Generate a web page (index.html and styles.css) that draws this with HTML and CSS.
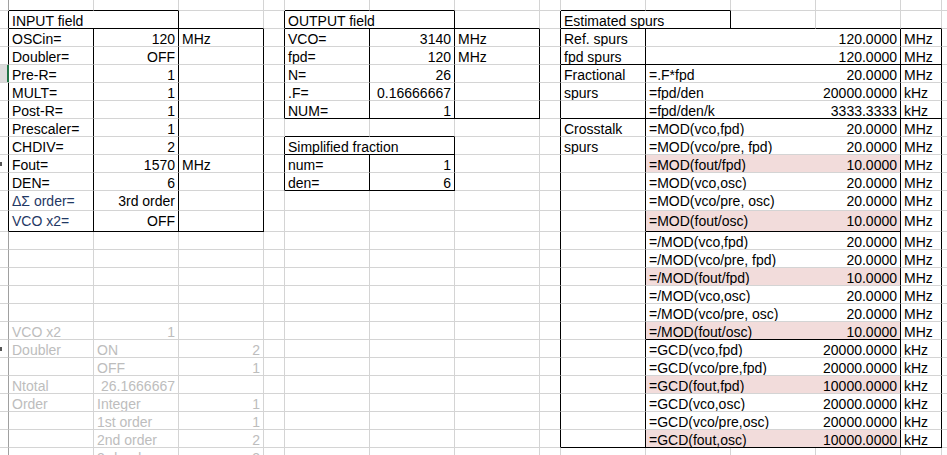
FILE: index.html
```html
<!DOCTYPE html>
<html lang="en">
<head>
<meta charset="utf-8">
<title>PLL spur calculator</title>
<link rel="stylesheet" href="styles.css">
</head>
<body>
<div class="sheet">
  <div class="row r0">
    <span class="h"></span><span class="bB"></span><span class="bB"></span><span></span><span></span><span class="bB"></span><span class="bB"></span><span></span><span></span><span class="bB"></span><span class="bB"></span><span></span><span></span><span></span><span></span>
  </div>
  <div class="row">
    <span class="h bR"></span><span class="s2 bR bB">INPUT field</span><span class="bB"></span><span class="bR"></span><span class="s2 bR bB">OUTPUT field</span><span class="bB"></span><span class="bR"></span><span class="s2 bR bB">Estimated spurs</span><span class="bB"></span><span class="bB"></span><span class="bB"></span><span></span>
  </div>
  <div class="row">
    <span class="h bR"></span><span class="bR">OSCin=</span><span class="bR n">120</span><span class="bR">MHz</span><span class="bR"></span><span class="bR">VCO=</span><span class="bR n">3140</span><span class="bR">MHz</span><span class="bR"></span><span class="bR">Ref. spurs</span><span class="s3 bR sp"><em></em><em>120.0000</em></span><span class="bR">MHz</span><span></span>
  </div>
  <div class="row">
    <span class="h bR"></span><span class="bR">Doubler=</span><span class="bR n">OFF</span><span class="bR"></span><span class="bR"></span><span class="bR">fpd=</span><span class="bR n">120</span><span class="bR">MHz</span><span class="bR"></span><span class="bR bB">fpd spurs</span><span class="s3 bR bB sp"><em></em><em>120.0000</em></span><span class="bR bB">MHz</span><span></span>
  </div>
  <div class="row">
    <span class="h bR sel"></span><span class="bR">Pre-R=</span><span class="bR n">1</span><span class="bR"></span><span class="bR"></span><span class="bR">N=</span><span class="bR n">26</span><span class="bR"></span><span class="bR"></span><span class="bR">Fractional</span><span class="s3 bR sp"><em>=.F*fpd</em><em>20.0000</em></span><span class="bR">MHz</span><span></span>
  </div>
  <div class="row">
    <span class="h bR"></span><span class="bR">MULT=</span><span class="bR n">1</span><span class="bR"></span><span class="bR"></span><span class="bR">.F=</span><span class="bR n">0.16666667</span><span class="bR"></span><span class="bR"></span><span class="bR">spurs</span><span class="s3 bR sp"><em>=fpd/den</em><em>20000.0000</em></span><span class="bR">kHz</span><span></span>
  </div>
  <div class="row">
    <span class="h bR"></span><span class="bR">Post-R=</span><span class="bR n">1</span><span class="bR"></span><span class="bR"></span><span class="bR bB">NUM=</span><span class="bR bB n">1</span><span class="bR bB"></span><span class="bR"></span><span class="bR bB"></span><span class="s3 bR bB sp"><em>=fpd/den/k</em><em>3333.3333</em></span><span class="bR bB">kHz</span><span></span>
  </div>
  <div class="row">
    <span class="h bR"></span><span class="bR">Prescaler=</span><span class="bR n">1</span><span class="bR"></span><span></span><span class="bB"></span><span class="bB"></span><span></span><span class="bR"></span><span class="bR">Crosstalk</span><span class="s3 bR sp"><em>=MOD(vco,fpd)</em><em>20.0000</em></span><span class="bR">MHz</span><span></span>
  </div>
  <div class="row">
    <span class="h bR"></span><span class="bR">CHDIV=</span><span class="bR n">2</span><span class="bR"></span><span class="bR"></span><span class="s2 bR bB">Simplified fraction</span><span></span><span class="bR"></span><span class="bR">spurs</span><span class="s3 bR sp"><em>=MOD(vco/pre, fpd)</em><em>20.0000</em></span><span class="bR">MHz</span><span></span>
  </div>
  <div class="row">
    <span class="h bR"><b class="tick"></b></span><span class="bR">Fout=</span><span class="bR n">1570</span><span class="bR">MHz</span><span class="bR"></span><span class="bR">num=</span><span class="bR n">1</span><span></span><span class="bR"></span><span class="bR"></span><span class="s3 bR sp pk"><em>=MOD(fout/fpd)</em><em>10.0000</em></span><span class="bR">MHz</span><span></span>
  </div>
  <div class="row">
    <span class="h bR"></span><span class="bR">DEN=</span><span class="bR n">6</span><span class="bR"></span><span class="bR"></span><span class="bR bB">den=</span><span class="bR bB n">6</span><span></span><span class="bR"></span><span class="bR"></span><span class="s3 bR sp"><em>=MOD(vco,osc)</em><em>20.0000</em></span><span class="bR">MHz</span><span></span>
  </div>
  <div class="row tall r11">
    <span class="h bR"></span><span class="bR bl">ΔΣ order=</span><span class="bR n">3rd order</span><span class="bR"></span><span></span><span></span><span></span><span></span><span class="bR"></span><span class="bR"></span><span class="s3 bR sp"><em>=MOD(vco/pre, osc)</em><em>20.0000</em></span><span class="bR">MHz</span><span></span>
  </div>
  <div class="row tall r12">
    <span class="h bR"></span><span class="bR bB bl">VCO x2=</span><span class="bR bB n">OFF</span><span class="bR bB"></span><span></span><span></span><span></span><span></span><span class="bR"></span><span class="bR"></span><span class="s3 bR bB sp pk"><em>=MOD(fout/osc)</em><em>10.0000</em></span><span class="bR">MHz</span><span></span>
  </div>
  <div class="row">
    <span class="h"></span><span></span><span></span><span></span><span></span><span></span><span></span><span></span><span class="bR"></span><span class="bR"></span><span class="s3 bR sp"><em>=/MOD(vco,fpd)</em><em>20.0000</em></span><span class="bR">MHz</span><span></span>
  </div>
  <div class="row">
    <span class="h"></span><span></span><span></span><span></span><span></span><span></span><span></span><span></span><span class="bR"></span><span class="bR"></span><span class="s3 bR sp"><em>=/MOD(vco/pre, fpd)</em><em>20.0000</em></span><span class="bR">MHz</span><span></span>
  </div>
  <div class="row">
    <span class="h"></span><span></span><span></span><span></span><span></span><span></span><span></span><span></span><span class="bR"></span><span class="bR"></span><span class="s3 bR sp pk"><em>=/MOD(fout/fpd)</em><em>10.0000</em></span><span class="bR">MHz</span><span></span>
  </div>
  <div class="row">
    <span class="h"></span><span></span><span></span><span></span><span></span><span></span><span></span><span></span><span class="bR"></span><span class="bR"></span><span class="s3 bR sp"><em>=/MOD(vco,osc)</em><em>20.0000</em></span><span class="bR">MHz</span><span></span>
  </div>
  <div class="row">
    <span class="h"></span><span></span><span></span><span></span><span></span><span></span><span></span><span></span><span class="bR"></span><span class="bR"></span><span class="s3 bR sp"><em>=/MOD(vco/pre, osc)</em><em>20.0000</em></span><span class="bR">MHz</span><span></span>
  </div>
  <div class="row">
    <span class="h"></span><span class="g">VCO x2</span><span class="g n">1</span><span></span><span></span><span></span><span></span><span></span><span class="bR"></span><span class="bR"></span><span class="s3 bR bB sp pk"><em>=/MOD(fout/osc)</em><em>10.0000</em></span><span class="bR">MHz</span><span></span>
  </div>
  <div class="row">
    <span class="h"><b class="tick"></b></span><span class="g">Doubler</span><span class="g">ON</span><span class="g n">2</span><span></span><span></span><span></span><span></span><span class="bR"></span><span class="bR"></span><span class="s3 bR sp"><em>=GCD(vco,fpd)</em><em>20000.0000</em></span><span class="bR">kHz</span><span></span>
  </div>
  <div class="row">
    <span class="h"></span><span></span><span class="g">OFF</span><span class="g n">1</span><span></span><span></span><span></span><span></span><span class="bR"></span><span class="bR"></span><span class="s3 bR sp"><em>=GCD(vco/pre,fpd)</em><em>20000.0000</em></span><span class="bR">kHz</span><span></span>
  </div>
  <div class="row">
    <span class="h"></span><span class="g">Ntotal</span><span class="g n">26.1666667</span><span></span><span></span><span></span><span></span><span></span><span class="bR"></span><span class="bR"></span><span class="s3 bR sp pk"><em>=GCD(fout,fpd)</em><em>10000.0000</em></span><span class="bR">kHz</span><span></span>
  </div>
  <div class="row">
    <span class="h"></span><span class="g">Order</span><span class="g">Integer</span><span class="g n">1</span><span></span><span></span><span></span><span></span><span class="bR"></span><span class="bR"></span><span class="s3 bR sp"><em>=GCD(vco,osc)</em><em>20000.0000</em></span><span class="bR">kHz</span><span></span>
  </div>
  <div class="row">
    <span class="h"></span><span></span><span class="g">1st order</span><span class="g n">1</span><span></span><span></span><span></span><span></span><span class="bR"></span><span class="bR"></span><span class="s3 bR sp"><em>=GCD(vco/pre,osc)</em><em>20000.0000</em></span><span class="bR">kHz</span><span></span>
  </div>
  <div class="row">
    <span class="h"></span><span></span><span class="g">2nd order</span><span class="g n">2</span><span></span><span></span><span></span><span></span><span class="bR"></span><span class="bR bB"></span><span class="s3 bR bB sp pk"><em>=GCD(fout,osc)</em><em>10000.0000</em></span><span class="bR bB">kHz</span><span></span>
  </div>
  <div class="row">
    <span class="h"></span><span></span><span class="g">3rd order</span><span class="g n">3</span><span></span><span></span><span></span><span></span><span></span><span></span><span></span><span></span><span></span><span></span><span></span>
  </div>
</div>
</body>
</html>
```

FILE: styles.css
```css
html, body {
  margin: 0;
  padding: 0;
  background: #ffffff;
  overflow: hidden;
}

.sheet {
  display: flex;
  flex-direction: column;
  font-family: "Liberation Sans", Arial, sans-serif;
  font-size: 14px;
  color: #000000;
}

.row {
  display: grid;
  grid-template-columns: 9px 85px 85px 85px 21px 85px 85px 85px 21px 85px 85px 85px 85px 41px 1fr;
  height: 18px;
  flex: none;
}

.row.r0 { height: 11px; }
.row.r11 { height: 20px; }
.row.r12 { height: 21px; }

.row > span {
  box-sizing: border-box;
  border-right: 1px solid #d4d4d4;
  border-bottom: 1px solid #d4d4d4;
  display: flex;
  align-items: flex-end;
  justify-content: flex-start;
  padding: 0 3px;
  line-height: 14px;
  white-space: nowrap;
  overflow: hidden;
  min-width: 0;
}

.row.tall > span {
  align-items: center;
  line-height: 16px;
}

.row > span.h {
  padding: 0;
  border-right-color: #a0a0a0;
  align-items: center;
}

.row > span.s2 { grid-column: span 2; }
.row > span.s3 { grid-column: span 3; }

.row > span.bR { border-right-color: #000000; }
.row > span.bB { border-bottom-color: #000000; }

.row > span.n { justify-content: flex-end; }
.row > span.sp { justify-content: space-between; }
.row > span.pk { background: #f2dcdb; }

.row > span.sel {
  background: #dcdcdc;
  border-right-color: #217346;
  box-shadow: inset -1px 0 #217346;
}

.sp em { font-style: normal; }

.g { color: #bdbdbd; }
.bl { color: #1f3864; font-size: 14px; }

.tick {
  display: block;
  width: 2px;
  height: 4px;
  background: #555555;
}
```
